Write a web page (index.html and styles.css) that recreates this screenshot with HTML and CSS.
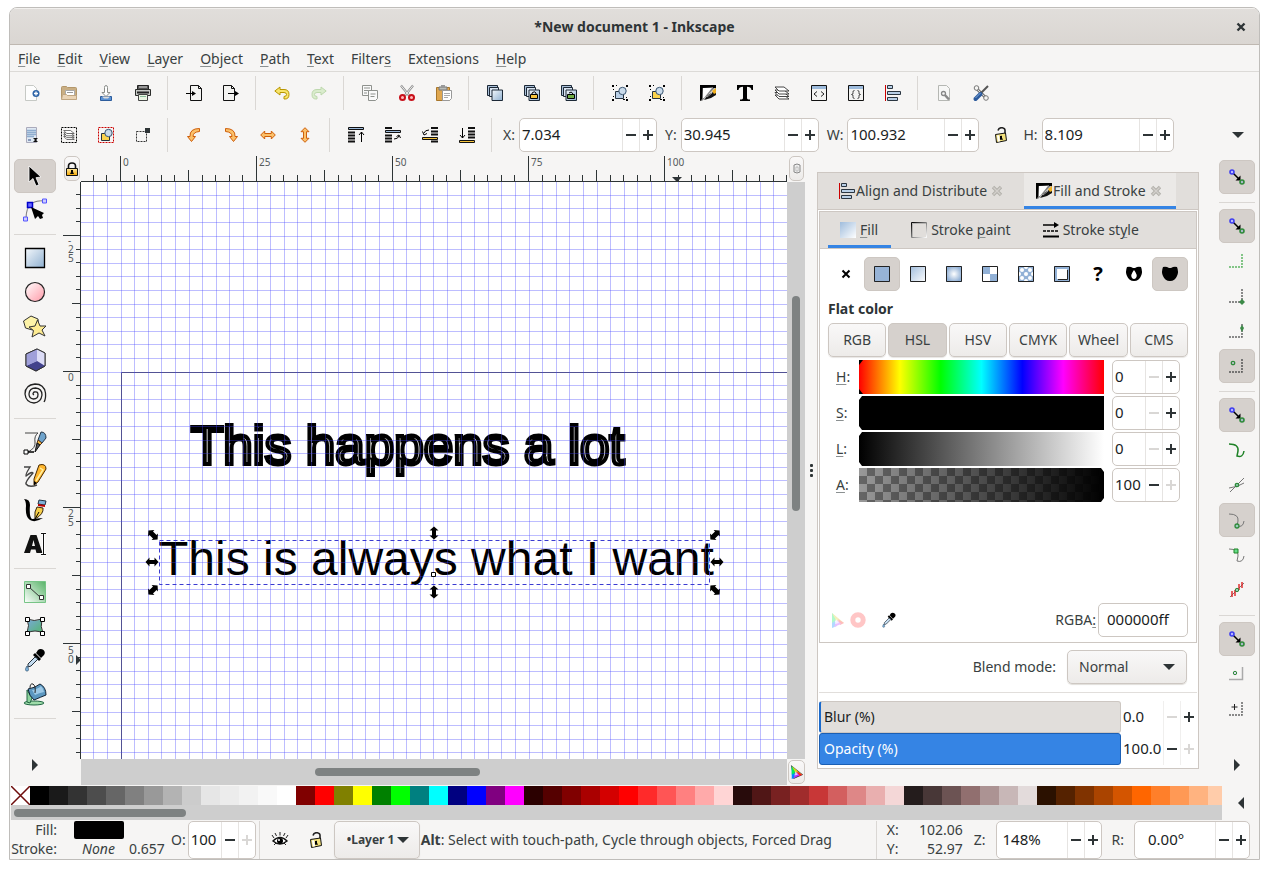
FILE: index.html
```html
<!DOCTYPE html>
<html lang="en">
<head>
<meta charset="utf-8">
<title>*New document 1 - Inkscape</title>
<link rel="stylesheet" href="styles.css">
</head>
<body>
<svg class="defs" aria-hidden="true">
  <defs>
    <linearGradient id="blue" x1="0" y1="0" x2="1" y2="1"><stop offset="0" stop-color="#f4f8fc"/><stop offset="1" stop-color="#8fb0d0"/></linearGradient>
    <linearGradient id="blueRev" x1="0" y1="0" x2="1" y2="1"><stop offset="0" stop-color="#9fbcdc"/><stop offset="1" stop-color="#fff"/></linearGradient>
    <linearGradient id="pink" x1="0" y1="0" x2="1" y2="1"><stop offset="0" stop-color="#fff"/><stop offset="1" stop-color="#ff9aa8"/></linearGradient>
    <linearGradient id="gold" x1="0" y1="0" x2="0" y2="1"><stop offset="0" stop-color="#fde9a0"/><stop offset="1" stop-color="#f5a700"/></linearGradient>
    <linearGradient id="green" x1="0" y1="1" x2="1" y2="0"><stop offset="0" stop-color="#fff"/><stop offset="1" stop-color="#58b368"/></linearGradient>
    <linearGradient id="teal" x1="0" y1="0" x2="1" y2="1"><stop offset="0" stop-color="#7aa8dc"/><stop offset="1" stop-color="#53b66a"/></linearGradient>
    <linearGradient id="ink" x1="0" y1="0" x2="1" y2="1"><stop offset="0" stop-color="#000"/><stop offset="1" stop-color="#fff"/></linearGradient>
    <radialGradient id="glow"><stop offset="0" stop-color="#fff"/><stop offset="1" stop-color="#92b1d6"/></radialGradient>
    <symbol id="minus" viewBox="0 0 10 10"><path d="M0 4h10v2H0z" fill="currentColor"/></symbol>
    <symbol id="plus" viewBox="0 0 10 10"><path d="M0 4h4V0h2v4h4v2H6v4H4V6H0z" fill="currentColor"/></symbol>
    <symbol id="down" viewBox="0 0 12 6"><path d="M0 0h12L6 6z" fill="#2e3436"/></symbol>
    <symbol id="snap" viewBox="0 0 16 16"><path d="M4 4l6 6" stroke="#000" stroke-width="1.500"/><path d="M11.500 6.500v5h-5z" fill="#000"/><circle cx="3" cy="3" r="2" fill="#b5b5ff" stroke="#3d3df0" stroke-width="1.600"/><circle cx="13" cy="13" r="2" fill="#a8b8c8" stroke="#2f8a3a" stroke-width="1.600"/></symbol>
    <symbol id="align" viewBox="0 0 16 16"><path d="M.5 0v16" stroke="#c00"/><path d="M2.500.5h5v3h-5zM2.500 6.500h13v3h-13zM2.500 12.500h10v3h-10z" fill="#b9cfe6" stroke="#2a3540"/></symbol>
    <symbol id="fillstroke" viewBox="0 0 16 16"><path d="M0 0h16v2L2 16H0z" fill="url(#ink)"/><path d="M0 0h16v3h-3V2L2 3v11l-2 2z"/><path d="M3 3h9L4 13H3z" fill="#fff"/><path d="M16 3v7l-5 3-7 2 4-5 5-3z" fill="#111"/><path d="M12 6l4-3v5l-2 1z" fill="#f0b020"/><path d="M7 12l5-4" stroke="#999"/></symbol>
    <symbol id="unlock" viewBox="0 0 16 16"><path d="M5 3.500C6-.5 12.500 0 12 4v3" fill="none" stroke="#222" stroke-width="1.600"/><path d="M2.500 7.500l10-1.500 1 7.500-10 2z" fill="#f3e17c" stroke="#111"/><path d="M4 8.500l2-.3 1 6-2 .5z" fill="#fff"/><path d="M7 9l2-.3v2l1 2H7z"/></symbol>
    <symbol id="page" viewBox="0 0 16 16"><path d="M2.500.5h8l3 3v12h-11z" fill="#f3f3f1" stroke="#111"/><path d="M10.500.5v3h3" fill="none" stroke="#111"/></symbol>
    <symbol id="objs" viewBox="0 0 16 16"><path d="M3.500 6.500h8v7h-8z" fill="var(--box,#b9cfe6)" stroke="#26323e"/><circle cx="10.500" cy="6" r="3.700" fill="#c9daea" stroke="#3a5570"/></symbol>
    <symbol id="corners" viewBox="0 0 16 16"><path d="M0 0h2v2H0zM14 0h2v2h-2zM0 14h2v2H0zM14 14h2v2h-2zM4 0h1v1H4zM11 14h2v1h-2zM1 4h1v1H1zM1 11h1v1H1zM14 12h1v1h-1z"/></symbol>
    <symbol id="copies" viewBox="0 0 16 16"><path d="M.5.500h10v10H.5z" fill="#a9bfd8" stroke="#1c2836"/><path d="M2.500 2.500h9v9h-9z" fill="#d8e4f2" stroke="#1c2836"/><path d="M5 5h10.500v10.500H5z" fill="url(#blue)" stroke="#1c2836"/></symbol>
    <symbol id="layers" viewBox="0 0 16 16"><g fill="#fff" stroke="#333" stroke-width=".9"><path d="M1 10h9l5 4H5z"/><path d="M1 7.500h9l5 4H5z"/><path d="M1 5h9l5 4H5z"/><path d="M1 2h9l5 4H5z"/></g></symbol>
    <symbol id="dropper" viewBox="0 0 24 24"><path d="M15 2c3-3 9 1 6 5l-3 3-5-5z"/><path d="M12 5l6 6-2 2-6-6z"/><path d="M12 9L5 16v3l3-1 7-7z" fill="#c5dcf0" stroke="#23313d"/><path d="M4 18c2 3 2 5 0 5s-2-2 0-5z" fill="#7fb4de" stroke="#31506b" stroke-width=".7"/></symbol>
    <symbol id="square" viewBox="0 0 16 16"><path d="M.5.500h15v15H.5z" fill="none" stroke="#222"/></symbol>
    <symbol id="gamut" viewBox="0 0 16 16"><path d="M2 1l5 13-5 2z" fill="#08f"/><path d="M2 1l6 6-6 4z" fill="#0e5"/><path d="M2 1l12 10-6 1z" fill="#dc2"/><path d="M8 7l6 4-4 2z" fill="#f22"/><path d="M7 8l4 4-7 3z" fill="#b3f"/><path d="M6 7l3 4-4 1z" fill="#fff" opacity=".7"/></symbol>
    <symbol id="arrow2" viewBox="-8 -8 16 16"><path d="M-6.500 0l4-4.500v2.500h5v-2.500l4 4.500-4 4.500V2h-5v2.500z"/></symbol>
    <symbol id="arrow3" viewBox="-8 -8 16 16"><path d="M-6.500 0l4-4.500v2h5v-2l4 4.500-4 4.500v-2h-5v2z"/></symbol>
    <symbol id="xmark" viewBox="0 0 12 12"><path d="M2 2l8 8M10 2L2 10" stroke="#b3b0ab" stroke-width="3.400"/><path d="M2.500 2.500l7 7M9.500 2.500l-7 7" stroke="#d3d0cc" stroke-width="1.400"/></symbol>
  </defs>
</svg>

<div class="window">
  <header class="titlebar">
    <h1>*New document 1 - Inkscape</h1>
    <button class="close" aria-label="Close"><svg width="10" height="10" viewBox="0 0 10 10"><path d="M1.500 1.500l7 7M8.500 1.500l-7 7" stroke="#2e3436" stroke-width="2.400"/></svg></button>
  </header>

  <nav class="menubar">
    <a href="#file"><u>F</u>ile</a><a href="#edit"><u>E</u>dit</a><a href="#view"><u>V</u>iew</a><a href="#layer"><u>L</u>ayer</a><a href="#object"><u>O</u>bject</a><a href="#path"><u>P</u>ath</a><a href="#text"><u>T</u>ext</a><a href="#filters">Filter<u>s</u></a><a href="#extensions">Exte<u>n</u>sions</a><a href="#help"><u>H</u>elp</a>
  </nav>

  <div class="bar">
    <button aria-label="New"><svg class="i" viewBox="0 0 16 16"><path d="M1.500.5h8l3 3v12h-11z" fill="#fdfdfd" stroke="#c6c9c5"/><circle cx="12" cy="8.500" r="3.500" fill="#2f65a8"/><path d="M12 6.500v4M10 8.500h4" stroke="#fff" stroke-width="1.300"/></svg></button>
    <button aria-label="Open"><svg class="i" viewBox="0 0 16 16"><path d="M.5 2.500q0-1 1-1h4l1 1h8q1 0 1 1V14H.5z" fill="#c9ae83" stroke="#b3976b"/><path d="M4.500 5.500h9v5h-9z" fill="#fff" stroke="#aaa"/><path d="M6 7.500h6" stroke="#999"/><path d="M.5 14.500l1-5h4l1 1h9v4z" fill="#ead4b6" stroke="#c0a682"/></svg></button>
    <button aria-label="Save"><svg class="i" viewBox="0 0 16 16"><path d="M2.500 11.500h11v4h-11z" fill="#5b92d4" stroke="#2d5c9c"/><path d="M4 11.500h8l-2 2H6z" fill="#dcdcdc"/><path d="M8 .5q1.500 0 1.500 2v5h2.500l-4 4-4-4h2.500v-5q0-2 1.500-2z" fill="#fff" stroke="#8a8d89"/></svg></button>
    <button aria-label="Print"><svg class="i" viewBox="0 0 16 16"><path d="M2.500.5h11v4h-11z" fill="#555" stroke="#222"/><path d="M4 2h8" stroke="#ddd"/><path d="M.5 4.500h15v6H.5z" fill="#c7c9c5" stroke="#2b2d2b"/><path d="M2 7.500h12" stroke="#222" stroke-width="2"/><path d="M3.500 9.500h9v6h-9z" fill="#eaf5e2" stroke="#444"/><path d="M5 11.500h6" stroke="#8b9" /></svg></button>
    <hr>
    <button aria-label="Import"><svg class="i" viewBox="0 0 16 16"><use href="#page" x="2"/><path d="M0 8.500h9" stroke="#000"/><path d="M6 6l4 2.500L6 11z"/></svg></button>
    <button aria-label="Export"><svg class="i" viewBox="0 0 16 16"><use href="#page" x="-2"/><path d="M5 8.500h9" stroke="#000"/><path d="M12 6l4 2.500-4 2.500z"/></svg></button>
    <hr>
    <button aria-label="Undo"><svg class="i" viewBox="0 0 16 16"><path d="M.8 6L6 2v2.500h4q5 0 5 5T10 14v-2.500q2.500 0 2.500-2t-2.500-2H6V10z" fill="#f8e56b" stroke="#b99600"/></svg></button>
    <button aria-label="Redo" disabled><svg class="i faded" viewBox="0 0 16 16"><path d="M15.200 6L10 2v2.500H6q-5 0-5 5T6 14v-2.500q-2.500 0-2.500-2t2.500-2h4V10z" fill="#cfe9bd" stroke="#a6cc90"/></svg></button>
    <hr>
    <button aria-label="Copy"><svg class="i" viewBox="0 0 16 16"><g fill="#fafafa" stroke="#8f928e"><path d="M.5.500h9v10h-9z"/><path d="M2 3h6M2 5.500h6M2 8h3"/><path d="M6.500 5.500h9v8l-2 2h-7z"/><path d="M8.500 9h5M8.500 11.500h4"/></g></svg></button>
    <button aria-label="Cut"><svg class="i" viewBox="0 0 16 16"><path d="M2 .5l8 10M14 .5l-8 10" stroke="#888" stroke-width="2.200"/><path d="M2 .5l8 10M14 .5l-8 10" stroke="#eee"/><circle cx="3.500" cy="12.500" r="2.500" fill="#fbb" stroke="#c8101a" stroke-width="2"/><circle cx="12.500" cy="12.500" r="2.500" fill="#fbb" stroke="#c8101a" stroke-width="2"/></svg></button>
    <button aria-label="Paste"><svg class="i" viewBox="0 0 16 16"><path d="M.5 2.500h13v13H.5z" fill="#e0a74f" stroke="#a8762b"/><path d="M3 2h8v3H3z" fill="#b9bbb7" stroke="#777"/><path d="M5 0h4v2H5z" fill="#999"/><path d="M6.500 5.500h9v8l-2 2h-7z" fill="#fff" stroke="#999"/><path d="M8 8.500h6M8 10.500h6M8 12.500h4" stroke="#aaa"/></svg></button>
    <hr>
    <button aria-label="Duplicate"><svg class="i" viewBox="0 0 16 16"><use href="#copies"/></svg></button>
    <button aria-label="Clone"><svg class="i" viewBox="0 0 16 16"><use href="#copies"/><path d="M8 10V8q2.500-2.500 4 0v2" fill="none" stroke="#000"/><path d="M6.500 9.500h7v4h-7z" fill="#f6c33c" stroke="#000"/></svg></button>
    <button aria-label="Unlink clone"><svg class="i" viewBox="0 0 16 16"><use href="#copies"/><path d="M8 8q2.500-2.500 4 1v1" fill="none" stroke="#000"/><path d="M6.500 9.500h7v4h-7z" fill="#6fae45" stroke="#000"/></svg></button>
    <hr>
    <button aria-label="Group"><svg class="i" viewBox="0 0 16 16"><use href="#objs"/><use href="#corners"/></svg></button>
    <button aria-label="Ungroup"><svg class="i yellow" viewBox="0 0 16 16"><use href="#objs"/><use href="#corners"/></svg></button>
    <hr>
    <button aria-label="Fill and Stroke"><svg class="i" viewBox="0 0 16 16"><use href="#fillstroke"/></svg></button>
    <button aria-label="Text and Font"><svg class="i" viewBox="0 0 16 16"><path d="M0 0h16v5h-1.500Q14 1.800 10 1.800V13q0 1.500 3 1.500V16H3v-1.500q3 0 3-1.500V1.800Q2 1.800 1.500 5H0z"/></svg></button>
    <button aria-label="Layers"><svg class="i" viewBox="0 0 16 16"><use href="#layers"/></svg></button>
    <button aria-label="XML editor"><svg class="i" viewBox="0 0 16 16"><path d="M.5.500h15v15H.5z" fill="#f4f4f2" stroke="#111"/><path d="M1 1h14v3H1z" fill="#9dbbdc"/><path d="M6 6.500L3 9l3 2.500M10 6.500L13 9l-3 2.500" fill="none" stroke="#222"/></svg></button>
    <button aria-label="Selectors"><svg class="i" viewBox="0 0 16 16"><path d="M.5.500h15v15H.5z" fill="#f4f4f2" stroke="#111"/><path d="M1 1h14v3H1z" fill="#9dbbdc"/><path d="M6.500 5.500q-2 0-1.500 2T3.500 9.500q2 0 1.500 2t1.500 2M9.500 5.500q2 0 1.500 2t1.500 2q-2 0-1.500 2t-1.500 2" fill="none" stroke="#444"/></svg></button>
    <button aria-label="Align"><svg class="i" viewBox="0 0 16 16"><use href="#align"/></svg></button>
    <hr>
    <button aria-label="Document properties"><svg class="i" viewBox="0 0 16 16"><path d="M2.500.5h8l3 3v12h-11z" fill="#f7f7f6" stroke="#b5b7b3"/><path d="M8 9l5 5.500" stroke="#888" stroke-width="2.500"/><circle cx="7.500" cy="8.500" r="2" fill="#f5f5f5" stroke="#888" stroke-width="1.300"/></svg></button>
    <button aria-label="Preferences"><svg class="i" viewBox="0 0 16 16"><path d="M3 3l10 10" stroke="#777" stroke-width="3"/><path d="M3 3l10 10" stroke="#ddd"/><circle cx="3.500" cy="3" r="2.300" fill="#f5f5f3" stroke="#777"/><circle cx="13" cy="13" r="2.300" fill="#f5f5f3" stroke="#777"/><path d="M15 1L8 8" stroke="#555" stroke-width="2"/><path d="M7.500 9L2.500 14" stroke="#2c5a9c" stroke-width="4" stroke-linecap="round"/><path d="M7.500 8l-5 5" stroke="#7fa9dc"/></svg></button>
  </div>

  <div class="bar">
    <button aria-label="Select all"><svg class="i" viewBox="0 0 16 16"><path d="M2.500.5h10v15h-10z" fill="#dfe9f3" stroke="#aab"/><path d="M3 3.500h9M3 5.500h9M3 7.500h9M3 9.500h7" stroke="#8fadcf" stroke-width="1.400"/><path d="M4 12h3v2H4z" fill="#89b"/><path d="M9 11h5l-2 2 2 2H9l2-2z" fill="#111"/></svg></button>
    <button aria-label="Select all in layers"><svg class="i" viewBox="0 0 16 16"><path d="M.5.500h15v15H.5z" fill="none" stroke="#000" stroke-dasharray="2 1"/><svg x="2" y="2" width="12" height="12"><use href="#layers"/></svg></svg></button>
    <button aria-label="Deselect"><svg class="i yellow" viewBox="0 0 16 16"><path d="M.5.500h15v15H.5z" fill="none" stroke="#c00" stroke-dasharray="2 1"/><use href="#objs"/></svg></button>
    <button aria-label="Touch selection"><svg class="i" viewBox="0 0 16 16"><path d="M1.500 4.500h10v10h-10z" fill="none" stroke="#333" stroke-dasharray="2 1"/><path d="M10 1h5v5h-5z" fill="#2e3436"/></svg></button>
    <hr>
    <button aria-label="Rotate left"><svg class="i" viewBox="0 0 16 16"><path d="M13.500 1.500q-10 0-9.500 8H1.500l4 5 4-5H7q0-4.500 6.500-5z" fill="#fbc16a" stroke="#cf5f0a"/></svg></button>
    <button aria-label="Rotate right"><svg class="i" viewBox="0 0 16 16"><path d="M2.500 1.500q10 0 9.500 8h2.500l-4 5-4-5H9q0-4.500-6.500-5z" fill="#fbc16a" stroke="#cf5f0a"/></svg></button>
    <button aria-label="Flip horizontal"><svg class="i" viewBox="0 0 16 16"><path d="M.7 8l4-4v2.500h6.600V4l4 4-4 4V9.500H4.700V12z" fill="#fbc16a" stroke="#cf5f0a"/></svg></button>
    <button aria-label="Flip vertical"><svg class="i" viewBox="0 0 16 16"><path d="M8 .7l4 4H9.500v6.600H12l-4 4-4-4h2.500V4.700H4z" fill="#fbc16a" stroke="#cf5f0a"/></svg></button>
    <hr>
    <button aria-label="Raise to top"><svg class="i" viewBox="0 0 16 16"><path d="M.5.500h15v2H.5z" fill="#9dbbdc" stroke="#111"/><path d="M0 5.500h7M0 8.500h7M0 11.500h7M0 14.500h7" stroke="#111" stroke-width="2"/><path d="M13.500 5v10M11 8l2.500-3L16 8" stroke="#000" fill="none"/></svg></button>
    <button aria-label="Raise"><svg class="i" viewBox="0 0 16 16"><path d="M0 1h7M0 8.500h7M0 11.500h7M0 14.500h7" stroke="#111" stroke-width="2"/><path d="M.5 3.500h15v2H.5z" fill="#9dbbdc" stroke="#111"/><path d="M9 12q4 0 5-3M11.500 9.500L14 8l1.500 3" stroke="#000" fill="none"/></svg></button>
    <button aria-label="Lower"><svg class="i" viewBox="0 0 16 16"><path d="M9 1h7M9 4.500h7M9 7.500h7M9 14.500h7" stroke="#111" stroke-width="2"/><path d="M.5 10.500h15v2H.5z" fill="#f6c33c" stroke="#111"/><path d="M7 3Q3 3 2 6M.5 4.500L2 8l3-1.500" stroke="#000" fill="none"/></svg></button>
    <button aria-label="Lower to bottom"><svg class="i" viewBox="0 0 16 16"><path d="M9 1h7M9 4.500h7M9 7.500h7M9 10.500h7" stroke="#111" stroke-width="2"/><path d="M.5 13.500h15v2H.5z" fill="#f6c33c" stroke="#111"/><path d="M3.500 1v10M1 8l2.500 3L6 8" stroke="#000" fill="none"/></svg></button>
    <hr>
    <span class="field"><label for="px">X:</label><span class="spin wide"><input id="px" value="7.034"><button aria-label="Decrease X"><svg><use href="#minus"/></svg></button><button aria-label="Increase X"><svg><use href="#plus"/></svg></button></span></span>
    <span class="field"><label for="py">Y:</label><span class="spin wide"><input id="py" value="30.945"><button aria-label="Decrease Y"><svg><use href="#minus"/></svg></button><button aria-label="Increase Y"><svg><use href="#plus"/></svg></button></span></span>
    <span class="field"><label for="pw">W:</label><span class="spin mid"><input id="pw" value="100.932"><button aria-label="Decrease W"><svg><use href="#minus"/></svg></button><button aria-label="Increase W"><svg><use href="#plus"/></svg></button></span></span>
    <button class="ratio" aria-label="Lock ratio"><svg class="i" viewBox="0 0 16 16"><use href="#unlock"/></svg></button>
    <span class="field"><label for="ph">H:</label><span class="spin mid"><input id="ph" value="8.109"><button aria-label="Decrease H"><svg><use href="#minus"/></svg></button><button aria-label="Increase H"><svg><use href="#plus"/></svg></button></span></span>
    <button class="more" aria-label="More"><svg width="12" height="6"><use href="#down"/></svg></button>
  </div>

  <main class="body">
    <div class="toolbox">
      <button class="on" aria-label="Selector"><svg class="t" viewBox="0 0 24 24"><path d="M6 2v16l4-3.500 3 7.500 3-1.300-3-7 5-.7z" stroke="#fff" stroke-width=".8"/></svg></button>
      <button aria-label="Node"><svg class="t" viewBox="0 0 24 24"><path d="M3 21Q3 10 8 6T22 3" fill="none" stroke="#777"/><path d="M4.500 4.500h5v5h-5z" fill="#6a6aff" stroke="#00c" stroke-width="1.500"/><path d="M19.500 1h4v4h-4zM.5 19h4v4h-4z" fill="#ccf" stroke="#55f"/><path d="M8 9l13 6-2 2 1 3-3 1-2-3-3 3z"/></svg></button>
      <hr>
      <button aria-label="Rectangle"><svg class="t" viewBox="0 0 24 24"><path d="M2.500 2.500h19v19h-19z" fill="url(#blue)" stroke="#000" stroke-width="1.300"/></svg></button>
      <button aria-label="Ellipse"><svg class="t" viewBox="0 0 24 24"><circle cx="12" cy="12" r="9.500" fill="url(#pink)" stroke="#222" stroke-width="1.200"/></svg></button>
      <button aria-label="Star"><svg class="t" viewBox="0 0 24 24"><path d="M8 2l7 3 .5 7-6 4-7-2-2-7z" fill="#fdf3a8" stroke="#333"/><path d="M14.500 6l2.500 6h6l-4 4 3 6-6-3-7 4 1.500-6.500L6 13l6-1z" fill="#fdeb92" stroke="#333"/></svg></button>
      <button aria-label="3D box"><svg class="t" viewBox="0 0 24 24"><path d="M3 6l11-5 8 4v13l-9 5-10-5z" fill="#b9b9e6" stroke="#333"/><path d="M14 1v12l8 5V5z" fill="#dcdcf6"/><path d="M3 18l11-5 8 5-9 5z" fill="#42428c"/><path d="M3 6l11-5v12L3 18z" fill="#a0a0da"/><path d="M3 6l11-5 8 4v13l-9 5-10-5z" fill="none" stroke="#333"/></svg></button>
      <button aria-label="Spiral"><svg class="t" viewBox="0 0 24 24"><path d="M11 13q-2-1 0-3 4-1 4 2.500 0 4.500-4.500 4.500Q6 16.500 6 12q.5-6 6.500-6 6.500.5 6.500 7-1 7.500-8 8-8-.5-9-9Q2 3 12 2q9 0 10.500 9 .5 6-1.500 9" fill="none" stroke="#222" stroke-width="1.300"/></svg></button>
      <hr>
      <button aria-label="Pen"><svg class="t" viewBox="0 0 24 24"><path d="M2 3h13q-4 3-3 9t-7 10" fill="none" stroke="#444"/><path d="M1 20h4v4H1z" fill="#fff" stroke="#000"/><path d="M5 22h6" stroke="#000" stroke-width="1.500"/><path d="M18 2q5 0 5 6l-4 5-4-3z" fill="#6ea3cc" stroke="#234"/><path d="M15 10l4 3-2 2-3-2z" fill="#f4b93a" stroke="#532"/><path d="M14 13l3 2-5 7z" fill="#555" stroke="#111"/></svg></button>
      <button aria-label="Pencil"><svg class="t" viewBox="0 0 24 24"><path d="M1 3h6q-5 8-4 9 6-5 7-3-8 9-7 11 3 4 11 1" fill="none" stroke="#444" stroke-width="1.400"/><path d="M16 1q7-2 7 4L15 18l-4 3 0-6z" fill="#ffb62e" stroke="#4a2a00"/><path d="M17 4l3 2-7 11" fill="none" stroke="#fff0a0" stroke-width="1.500"/><path d="M11 17v4l3-2z"/></svg></button>
      <button aria-label="Calligraphy"><svg class="t" viewBox="0 0 24 24"><path d="M1 1q6 0 6 6-1 12 2 14l11-1q-8 5-13 2Q2 19 3 8q0-5-2-7z"/><path d="M16 2l7 1-1 4-7-1z" fill="#7fb2d8" stroke="#234"/><path d="M15 6l7 1v2l-7-1z" fill="#b00"/><path d="M14 9l6 1q1 6-8 11-1-8 2-12z" fill="#f7cf4a" stroke="#321"/><path d="M12 21l4-7" stroke="#000"/></svg></button>
      <button aria-label="Text"><svg class="t" viewBox="0 0 24 24"><path d="M7.500 3h6l6 18h-6l-1-3.500H8L7 21H1zM10.500 8L9 14h3z" fill="#111"/><path d="M18 1.500h5M20.500 1.500v21M18 22.500h5" stroke="#fff" stroke-width="2.500"/><path d="M18 1.500h5M20.500 1.500v21M18 22.500h5" stroke="#111"/></svg></button>
      <hr>
      <button aria-label="Gradient"><svg class="t" viewBox="0 0 24 24"><path d="M1.500 1.500h21v21h-21z" fill="url(#green)" stroke="#77c486"/><path d="M6 7l11 10" stroke="#333"/><path d="M3.500 4.500h4v4h-4zM16.500 15.500h4v4h-4z" fill="#fff" stroke="#333"/></svg></button>
      <button aria-label="Mesh"><svg class="t" viewBox="0 0 24 24"><path d="M4 5q7 3 15 0-2 8 1 14-8-4-16 0 3-8 0-14z" fill="url(#teal)" stroke="#333"/><path d="M2.500 3.500h4v4h-4zM17.500 3.500h4v4h-4zM2.500 17.500h4v4h-4zM17.500 17.500h4v4h-4z" fill="#fff" stroke="#000"/></svg></button>
      <button aria-label="Dropper"><svg class="t" viewBox="0 0 24 24"><use href="#dropper"/></svg></button>
      <button aria-label="Paint bucket"><svg class="t" viewBox="0 0 24 24"><ellipse cx="11" cy="21" rx="10" ry="2" fill="#9fdcaa" stroke="#264"/><path d="M4 8l5 8-2 5-3-1z" fill="#8ed49c" stroke="#264"/><path d="M5 7q7-1 12-5 6 3 6 11-5 2-12 5Q6 14 5 7z" fill="#5b97c0" stroke="#123"/><path d="M9 8q6-1 9-4 2 2 3 6-5 1-9 3z" fill="#9cc8e6"/><path d="M7 6q0-5 3-4 3 2 2 9" fill="none" stroke="#222"/></svg></button>
      <hr>
      <button class="expand" aria-label="More tools"><svg width="6" height="12" viewBox="0 0 6 12"><path d="M0 0l6 6-6 6z" fill="#2e3436"/></svg></button>
    </div>

    <div class="desk">
      <button class="corner" aria-label="Lock guides"><svg width="14" height="14" viewBox="0 0 14 14"><path d="M3.500 6V4q0-3 3.500-3t3.500 3v2" fill="none" stroke="#111" stroke-width="1.600"/><path d="M1.500 6.500h11v7h-11z" fill="url(#gold)" stroke="#111"/><path d="M6 8h2v2l1 2H5l1-2z"/></svg></button>
      <svg class="ruler-h" aria-hidden="true">
        <defs><pattern id="tickh" width="136" height="26" patternUnits="userSpaceOnUse" patternTransform="translate(39 0)"><path d="M.5 0v26M14.500 19v7M27.500 19v7M41.500 19v7M54.500 19v7M68.500 14v12M82.500 19v7M95.500 19v7M109.500 19v7M122.500 19v7" stroke="#2e3436"/></pattern></defs>
        <rect width="100%" height="26" fill="url(#tickh)"/><path d="M0 25.500h3000" stroke="#2e3436"/>
        <g class="rt"><text x="42" y="10">0</text><text x="178" y="10">25</text><text x="314" y="10">50</text><text x="450" y="10">75</text><text x="586" y="10">100</text></g>
        <path d="M591 21h10l-5 5z" fill="#2e3436"/>
      </svg>
      <button class="corner" aria-label="Toggle display"><svg width="8" height="12" viewBox="0 0 8 12"><path d="M1 2q3-2 6 0v7q-3 2-6 0z" fill="#eee" stroke="#888"/><path d="M3 4h2v4H3z" fill="#fff" stroke="#999" stroke-width=".6"/></svg></button>
      <svg class="ruler-v" aria-hidden="true">
        <defs><pattern id="tickv" width="19" height="136" patternUnits="userSpaceOnUse" patternTransform="translate(0 189)"><path d="M1 .5h18M14 14.500h5M14 27.500h5M14 41.500h5M14 54.500h5M10 68.500h9M14 82.500h5M14 95.500h5M14 109.500h5M14 122.500h5" stroke="#2e3436"/></pattern></defs>
        <rect width="19" height="100%" fill="url(#tickv)"/><path d="M18.500 0v3000" stroke="#2e3436"/>
        <g class="rt"><text y="62"><tspan x="6">-</tspan><tspan x="6" dy="9">2</tspan><tspan x="6" dy="9">5</tspan></text><text x="6" y="199">0</text><text y="335"><tspan x="6">2</tspan><tspan x="6" dy="9">5</tspan></text><text y="472"><tspan x="6">5</tspan><tspan x="6" dy="9">0</tspan></text></g>
        <path d="M14 473v10l5-5z" fill="#2e3436"/>
      </svg>
      <svg class="canvas" role="img" aria-label="Drawing">
        <defs><pattern id="grid" width="136" height="136" patternUnits="userSpaceOnUse" patternTransform="translate(40 190)"><path d="M.5 0v136M13.500 0v136M27.500 0v136M40.500 0v136M54.500 0v136M68.500 0v136M81.500 0v136M95.500 0v136M108.500 0v136M122.500 0v136M0 .5h136M0 13.500h136M0 27.500h136M0 40.500h136M0 54.500h136M0 68.500h136M0 81.500h136M0 95.500h136M0 108.500h136M0 122.500h136" stroke="#3f3fff" stroke-opacity=".34"/></pattern></defs>
        <path d="M40.500 3000V190.500H3000" fill="none" stroke="#333" stroke-opacity=".8"/>
        <text class="outlined" x="110" y="282">This happens a lot</text>
        <text class="solid" x="78" y="393">This is always what I want</text>
        <rect width="100%" height="100%" fill="url(#grid)"/>
        <rect x="78" y="358" width="550" height="44" transform="translate(.5 .5)" fill="none" stroke="#3a3ad0" stroke-dasharray="4 3"/>
        <path d="M350.500 390.500h4v4h-4z" fill="#fff" stroke="#000"/>
        <g transform="translate(72 353) rotate(45)"><use href="#arrow3" x="-8" y="-8" width="16" height="16"/></g>
        <g transform="translate(634 353) rotate(-45)"><use href="#arrow3" x="-8" y="-8" width="16" height="16"/></g>
        <g transform="translate(72 408) rotate(-45)"><use href="#arrow3" x="-8" y="-8" width="16" height="16"/></g>
        <g transform="translate(634 408) rotate(45)"><use href="#arrow3" x="-8" y="-8" width="16" height="16"/></g>
        <g transform="translate(353 351) rotate(90)"><use href="#arrow2" x="-8" y="-8" width="16" height="16"/></g>
        <g transform="translate(353 410) rotate(90)"><use href="#arrow2" x="-8" y="-8" width="16" height="16"/></g>
        <g transform="translate(71 380)"><use href="#arrow2" x="-8" y="-8" width="16" height="16"/></g>
        <g transform="translate(636 380)"><use href="#arrow2" x="-8" y="-8" width="16" height="16"/></g>
      </svg>
      <div class="vscroll"><i></i></div>
      <div class="hscroll"><i></i></div>
      <button class="corner cms" aria-label="Color management"><svg width="14" height="16" viewBox="0 0 16 16"><path d="M1 0l14 11L4 16z" fill="#333"/><use href="#gamut"/></svg></button>
    </div>

    <div class="grip"><i></i><i></i><i></i></div>

    <section class="dock">
      <div class="tabs">
        <button class="tab"><svg class="i" viewBox="0 0 16 16"><use href="#align"/></svg><span>Align and Distribute</span><svg class="x"><use href="#xmark"/></svg></button>
        <button class="tab on"><svg class="i" viewBox="0 0 16 16"><use href="#fillstroke"/></svg><span>Fill and Stroke</span><svg class="x"><use href="#xmark"/></svg></button>
      </div>
      <div class="notebook">
        <div class="subtabs">
          <button class="on"><svg class="i" viewBox="0 0 16 16"><path d="M0 0h16v16H0z" fill="url(#blueRev)"/></svg><span><u>F</u>ill</span></button>
          <button><svg class="i" viewBox="0 0 16 16"><path d="M.5.500h15v15H.5z" fill="none" stroke="url(#ink)"/><path d="M1.500 15V1.500H15" fill="none" stroke="#999" stroke-width=".6"/></svg><span>Stroke <u>p</u>aint</span></button>
          <button><svg class="i" viewBox="0 0 16 16"><path d="M0 3h13" stroke="#000" stroke-width="1.500"/><path d="M11 0l5 3-5 3z"/><path d="M0 9h16" stroke="#000" stroke-width="1.500" stroke-dasharray="3 1"/><path d="M0 14.500h16" stroke="#000" stroke-width="2"/></svg><span>Stroke st<u>y</u>le</span></button>
        </div>
        <div class="paints">
          <button aria-label="No paint"><svg class="i" viewBox="0 0 16 16"><path d="M4.500 4.500l7 7M11.500 4.500l-7 7" stroke="#000" stroke-width="2"/></svg></button>
          <button class="on" aria-label="Flat color"><svg class="i" viewBox="0 0 16 16"><path d="M0 0h16v16H0z" fill="#97b3d6"/><use href="#square"/></svg></button>
          <button aria-label="Linear gradient"><svg class="i" viewBox="0 0 16 16"><path d="M0 0h16v16H0z" fill="url(#blueRev)"/><use href="#square"/></svg></button>
          <button aria-label="Radial gradient"><svg class="i" viewBox="0 0 16 16"><path d="M0 0h16v16H0z" fill="url(#glow)"/><use href="#square"/></svg></button>
          <button aria-label="Mesh gradient"><svg class="i" viewBox="0 0 16 16"><path d="M0 0h16v16H0z" fill="#fff"/><path d="M0 0h8v16h8V8H0z" fill="#92b1d6"/><path d="M0 8h8v8H0z" fill="#fff"/><use href="#square"/></svg></button>
          <button aria-label="Pattern"><svg class="i" viewBox="0 0 16 16"><path d="M0 0h16v16H0z" fill="#92b1d6"/><g fill="#fff"><circle cx="4" cy="4" r="2"/><circle cx="8" cy="8" r="2"/><circle cx="12" cy="4" r="2"/><circle cx="4" cy="12" r="2"/><circle cx="12" cy="12" r="2"/><circle cx="8" cy="1" r="2"/><circle cx="8" cy="15" r="2"/><circle cx="1" cy="8" r="2"/><circle cx="15" cy="8" r="2"/></g><use href="#square"/></svg></button>
          <button aria-label="Swatch"><svg class="i" viewBox="0 0 16 16"><path d="M0 0h16v16H0z" fill="#92b1d6"/><path d="M3 3h10v10H3z" fill="#fff"/><path d="M4 13.500h9.500V4" fill="none" stroke="#222"/><use href="#square"/></svg></button>
          <button aria-label="Unset"><b>?</b></button>
          <button aria-label="Even-odd"><svg class="i" viewBox="0 0 16 16"><path fill-rule="evenodd" d="M1 1q3-1 6 1h2q3-2 6-1 2 5 0 9-2 5-7 5t-7-5q-2-4 0-9zM8 4Q4 9 6 12q2 2 4 0 2-3-2-8z"/></svg></button>
          <button class="on" aria-label="Non-zero"><svg class="i" viewBox="0 0 16 16"><path d="M1 1q3-1 6 1h2q3-2 6-1 2 5 0 9-2 5-7 5t-7-5q-2-4 0-9z"/></svg></button>
        </div>
        <h2>Flat color</h2>
        <div class="modes"><button>RGB</button><button class="on">HSL</button><button>HSV</button><button>CMYK</button><button>Wheel</button><button>CMS</button></div>
        <div class="sliders">
          <label for="sh"><u>H</u>:</label><span class="slide"><input type="range" class="hue" value="0" aria-label="Hue"><svg><path d="M0 0h4L0 5z"/></svg><svg class="b"><path d="M0 0h4L0 5z"/></svg></span><span class="spin"><input id="sh" value="0"><button disabled aria-label="Decrease hue"><svg><use href="#minus"/></svg></button><button aria-label="Increase hue"><svg><use href="#plus"/></svg></button></span>
          <label for="ss"><u>S</u>:</label><span class="slide"><input type="range" class="sat" value="0" aria-label="Saturation"><svg class="w"><path d="M0 0h3L0 4z"/></svg><svg class="b w"><path d="M0 0h3L0 4z"/></svg></span><span class="spin"><input id="ss" value="0"><button disabled aria-label="Decrease saturation"><svg><use href="#minus"/></svg></button><button aria-label="Increase saturation"><svg><use href="#plus"/></svg></button></span>
          <label for="sl"><u>L</u>:</label><span class="slide"><input type="range" class="lum" value="0" aria-label="Lightness"><svg class="w"><path d="M0 0h3L0 4z"/></svg><svg class="b w"><path d="M0 0h3L0 4z"/></svg></span><span class="spin"><input id="sl" value="0"><button disabled aria-label="Decrease lightness"><svg><use href="#minus"/></svg></button><button aria-label="Increase lightness"><svg><use href="#plus"/></svg></button></span>
          <label for="sa"><u>A</u>:</label><span class="slide"><input type="range" class="alpha" value="100" aria-label="Alpha"><svg class="w r"><path d="M0 0h3L0 4z"/></svg><svg class="b w r"><path d="M0 0h3L0 4z"/></svg></span><span class="spin"><input id="sa" value="100"><button aria-label="Decrease alpha"><svg><use href="#minus"/></svg></button><button disabled aria-label="Increase alpha"><svg><use href="#plus"/></svg></button></span>
        </div>
        <div class="rgba">
          <button disabled aria-label="Color managed"><svg class="i faded" viewBox="0 0 16 16"><use href="#gamut"/></svg></button>
          <button disabled aria-label="Out of gamut"><svg class="i faded" viewBox="0 0 16 16"><circle cx="8" cy="8" r="5.200" fill="#fff" stroke="#f44" stroke-width="5"/></svg></button>
          <button class="pick" aria-label="Pick color"><svg class="i" viewBox="0 0 24 24"><use href="#dropper"/></svg></button>
          <label for="hex">RGBA<u>:</u></label><input id="hex" value="000000ff">
        </div>
      </div>
      <div class="blend"><label for="blend">Blend mode:</label><span class="combo"><select id="blend"><option>Normal</option></select><svg width="12" height="6"><use href="#down"/></svg></span></div>
      <div class="scales">
        <div class="scale"><span class="fill"><input type="range" value="0" id="blur"><label for="blur">Blur (%)</label></span><input class="num" value="0.0" aria-label="Blur value"><button disabled aria-label="Decrease blur"><svg><use href="#minus"/></svg></button><button aria-label="Increase blur"><svg><use href="#plus"/></svg></button></div>
        <div class="scale full"><span class="fill"><input type="range" value="100" id="opac"><label for="opac">Opacity (%)</label></span><input class="num" value="100.0" aria-label="Opacity value"><button aria-label="Decrease opacity"><svg><use href="#minus"/></svg></button><button disabled aria-label="Increase opacity"><svg><use href="#plus"/></svg></button></div>
      </div>
    </section>

    <div class="snapbar">
      <button class="on" aria-label="Enable snapping"><svg class="i" viewBox="0 0 16 16"><use href="#snap"/></svg></button>
      <hr>
      <button class="on" aria-label="Snap bounding boxes"><svg class="i" viewBox="0 0 16 16"><use href="#snap"/></svg></button>
      <button aria-label="Snap edges"><svg class="i" viewBox="0 0 16 16"><path d="M0 14h13V1" fill="none" stroke="#5db563" stroke-width="1.500" stroke-dasharray="2 1"/></svg></button>
      <button aria-label="Snap corners"><svg class="i" viewBox="0 0 16 16"><path d="M0 14h13V1" fill="none" stroke="#666" stroke-width="1.500" stroke-dasharray="2 1"/><path d="M13 11l3 3-3 3-3-3z" fill="#3c8a48"/></svg></button>
      <button aria-label="Snap edge midpoints"><svg class="i" viewBox="0 0 16 16"><path d="M0 14h13V1" fill="none" stroke="#666" stroke-width="1.500" stroke-dasharray="2 1"/><path d="M13 2l2 3-2 4-2-4z" fill="#3c8a48"/></svg></button>
      <button class="on" aria-label="Snap centers"><svg class="i" viewBox="0 0 16 16"><path d="M0 14h13V1" fill="none" stroke="#555" stroke-width="1.500" stroke-dasharray="2 1"/><circle cx="4" cy="5" r="1.700" fill="#ccd" stroke="#2f8a3a" stroke-width="1.300"/></svg></button>
      <hr>
      <button class="on" aria-label="Snap nodes"><svg class="i" viewBox="0 0 16 16"><use href="#snap"/></svg></button>
      <button aria-label="Snap paths"><svg class="i" viewBox="0 0 16 16"><path d="M0 2q10 0 9 7l-1 5q6 2 7-5" fill="none" stroke="#1f8227" stroke-width="1.500"/></svg></button>
      <button aria-label="Snap intersections"><svg class="i" viewBox="0 0 16 16"><path d="M1 15L15 1M0 11q9-1 15-5" fill="none" stroke="#777"/><circle cx="8" cy="8" r="1.700" fill="#9cb" stroke="#2f8a3a" stroke-width="1.300"/></svg></button>
      <button class="on" aria-label="Snap cusps"><svg class="i" viewBox="0 0 16 16"><path d="M0 2q10 0 9 7l-1 5q6 2 7-5" fill="none" stroke="#777"/><circle cx="8" cy="14" r="2" fill="#9cb" stroke="#2f8a3a" stroke-width="1.300"/></svg></button>
      <button aria-label="Snap smooth nodes"><svg class="i" viewBox="0 0 16 16"><path d="M0 2q10 0 9 7l-1 5q6 2 7-5" fill="none" stroke="#777"/><path d="M5 2h4v4H5z" fill="#6d8" stroke="#1f8227"/></svg></button>
      <button aria-label="Snap midpoints"><svg class="i" viewBox="0 0 16 16"><path d="M1 15L15 1" stroke="#777"/><path d="M3 9v6M6 8v6M10 2v6M13 0v6" stroke="#d22" stroke-width="1.400"/><circle cx="8" cy="8" r="1.700" fill="#9cb" stroke="#2f8a3a"/></svg></button>
      <hr>
      <button class="on" aria-label="Snap others"><svg class="i" viewBox="0 0 16 16"><use href="#snap"/></svg></button>
      <button aria-label="Snap object centers"><svg class="i" viewBox="0 0 16 16"><path d="M0 13.500h13.500V1" fill="none" stroke="#aaa" stroke-width="1.500"/><circle cx="6" cy="7" r="1.700" fill="#dde" stroke="#2f8a3a"/></svg></button>
      <button aria-label="Snap rotation centers"><svg class="i" viewBox="0 0 16 16"><path d="M0 14h13V1" fill="none" stroke="#666" stroke-width="1.500" stroke-dasharray="2 1"/><path d="M5.500 3v6M2.500 6h6" stroke="#222"/></svg></button>
      <button class="expand" aria-label="More snapping"><svg width="6" height="12" viewBox="0 0 6 12"><path d="M0 0l6 6-6 6z" fill="#2e3436"/></svg></button>
    </div>
  </main>

  <div class="palette">
    <div class="strip">
      <div class="swatches" id="swatches"><button class="none" aria-label="None"><svg width="19" height="19" viewBox="0 0 19 19"><path d="M0 0l19 19M19 0L0 19" stroke="#6e0c0c" stroke-width="1.500"/></svg></button></div>
      <div class="pscroll"><i></i></div>
    </div>
    <button class="pmenu" aria-label="Palette menu"><svg width="6" height="12" viewBox="0 0 6 12"><path d="M6 0L0 6l6 6z" fill="#2e3436"/></svg></button>
  </div>

  <footer class="status">
    <div class="style">
      <span class="k">Fill:</span><button class="black" aria-label="Fill color"></button><span></span>
      <span class="k">Stroke:</span><em>None</em><span>0.657</span>
    </div>
    <label for="op">O:</label>
    <span class="spin o"><input id="op" value="100"><button aria-label="Decrease opacity"><svg><use href="#minus"/></svg></button><button disabled aria-label="Increase opacity"><svg><use href="#plus"/></svg></button></span>
    <hr>
    <button class="flat" aria-label="Layer visibility"><svg class="i" viewBox="0 0 16 16"><path d="M1 9q7-7 14 0-7 6-14 0z" fill="#fff" stroke="#111" stroke-width="1.400"/><circle cx="8" cy="9" r="3"/><circle cx="7" cy="8" r="1" fill="#fff"/><path d="M2 6L0 3M4.500 4L3 1M8 3.500V0M11.500 4L13 1M14 6l2-3M2 13l2-2M14 13l-2-2" stroke="#222"/></svg></button>
    <button class="flat" aria-label="Layer lock"><svg class="i" viewBox="0 0 16 16"><use href="#unlock"/></svg></button>
    <span class="combo layer"><select aria-label="Layer"><option>•Layer 1</option></select><svg width="12" height="6"><use href="#down"/></svg></span>
    <p><b>Alt</b>: Select with touch-path, Cycle through objects, Forced Drag</p>
    <hr>
    <div class="coords"><span>X:</span><span>102.06</span><span>Y:</span><span>52.97</span></div>
    <label for="zoom">Z:</label>
    <span class="spin z"><input id="zoom" value="148%"><button aria-label="Zoom out"><svg><use href="#minus"/></svg></button><button aria-label="Zoom in"><svg><use href="#plus"/></svg></button></span>
    <label for="rot">R:</label>
    <span class="spin rot"><input id="rot" value="0.00°"><button aria-label="Rotate less"><svg><use href="#minus"/></svg></button><button aria-label="Rotate more"><svg><use href="#plus"/></svg></button></span>
  </footer>
</div>
<script src="palette.js"></script>
</body>
</html>
```

FILE: palette.js
```js
const colors = (
  "000000 1a1a1a 333333 4d4d4d 666666 808080 999999 b3b3b3 cccccc e6e6e6 ececec f2f2f2 f9f9f9 ffffff " +
  "800000 ff0000 808000 ffff00 008000 00ff00 008080 00ffff 000080 0000ff 800080 ff00ff " +
  "2b0000 550000 800000 aa0000 d40000 ff0000 ff2a2a ff5555 ff8080 ffaaaa ffd5d5 " +
  "280b0b 501616 782121 a02c2c c83737 d35f5f de8787 e9afaf f4d7d7 " +
  "241c1c 483737 6c5353 916f6f ac9393 c8b7b7 e3dbdb " +
  "2b1100 552200 803300 aa4400 d45500 ff6600 ff7f2a ff9955 ffb380 ffccaa"
).split(" ");
const row = document.getElementById("swatches");
for (const c of colors) {
  const b = document.createElement("button");
  b.style.backgroundColor = "#" + c;
  b.setAttribute("aria-label", "#" + c);
  row.append(b);
}
```

FILE: styles.css
```css
* { box-sizing: border-box; }
body { margin: 0; background: #fff; color: #393f41; font: 14px/18px "Noto Sans", sans-serif; }
button, input, select { font: inherit; color: inherit; margin: 0; padding: 0; border: 0; background: none; border-radius: 0; outline: 0; }
button { display: flex; align-items: center; justify-content: center; }
hr { margin: 0; border: 0; background: #dad7d4; flex: none; }
h1, h2, p { margin: 0; font-size: inherit; }
a { color: inherit; text-decoration: none; }
u { text-decoration-thickness: 1px; text-underline-offset: 2px; text-decoration-color: #8b9091; }
svg { display: block; flex: none; overflow: visible; }
.defs { position: absolute; width: 0; height: 0; }
.i { width: 16px; height: 16px; }
.t { width: 24px; height: 24px; }
.faded { opacity: .3; }
.bar .faded { opacity: .7; }
.yellow { --box: #fbd24c; }

.window { display: flex; flex-direction: column; height: calc(100vh - 16px); min-height: 853px; margin: 7px 9px 9px; border: 1px solid #bfbdba; border-radius: 8px 8px 0 0; background: #f6f5f4; overflow: hidden; }
.titlebar { display: flex; align-items: center; height: 37px; padding: 2px 13px 0 23px; background: linear-gradient(#e1dedb, #dad6d2); border-bottom: 1px solid #bfb8b1; box-shadow: inset 0 1px #f2f0ee; }
.titlebar h1 { flex: 1; text-align: center; color: #2e3436; }
.menubar { display: flex; gap: 1px; height: 27px; padding-top: 1px; align-items: center; border-bottom: 1px solid #dcdad7; }
.menubar a { padding: 0 8px; }

.bar { display: flex; align-items: center; height: 42px; padding-left: 3px; }
.bar > button { width: 37px; height: 34px; }
.bar > hr { width: 1px; height: 34px; margin: 0 7px 0 6px; }
.field { display: flex; align-items: center; gap: 4px; margin-left: 4px; }
.field + .field { margin-left: 8px; }
.bar > .ratio { width: 44px; }
.ratio + .field { margin-left: 0; }
.bar > .more { width: 20px; margin: 0 11px 0 auto; }

.spin { display: flex; height: 34px; border: 1px solid #cdc7c2; border-radius: 5px; background: #fff; overflow: hidden; color: #1a1d1e; font-size: 15px; }
.spin input { flex: 1; min-width: 0; width: 0; padding: 0 0 2px 2px; }
.spin button { width: 17px; border-left: 1px solid #e6e4e2; color: #2e3436; }
.spin svg, .scale svg { width: 10px; height: 10px; }
.spin button:disabled, .scale button:disabled { color: #d9d7d5; }
.wide { width: 138px; }
.mid { width: 132px; }

.body { display: flex; flex: 1; min-height: 0; }
.toolbox { display: flex; flex-direction: column; width: 52px; padding: 3px 6px 3px 4px; }
.toolbox button { height: 34px; border: 1px solid transparent; border-radius: 5px; }
.toolbox hr, .snapbar hr { height: 1px; margin: 7px 0 6px; }
button.on { background: #d6d1cd; border-color: #cdc7c2; }
.toolbox .expand, .snapbar .expand { margin-top: auto; }

.desk { flex: 1; min-width: 0; display: grid; grid-template: 26px minmax(0, 1fr) 26px / 19px minmax(0, 1fr) 18px; }
.corner { border: 1px solid #cdc7c2; border-radius: 5px; background: linear-gradient(#f9f8f8, #edebe9); margin: 0 1px 1px 2px; }
.corner.cms { margin: 1px 0 1px 1px; overflow: hidden; }
.ruler-h, .ruler-v, .canvas { width: 100%; height: 100%; overflow: hidden; }
.canvas { background: #fff; }
.rt { font-size: 10px; fill: #555a5c; }
.canvas text { font-family: "Liberation Sans", Arial, sans-serif; }
.outlined { font-size: 53px; fill: #ddd; stroke: #000; stroke-width: 4px; }
.solid { font-size: 48px; fill: #000; }
.vscroll, .hscroll { background: #cecece; }
.vscroll { padding: 114px 5px 0; }
.vscroll i { display: block; height: 215px; border-radius: 4px; background: #7e8282; }
.hscroll { grid-column: 2; padding: 9px 0 0 234px; }
.hscroll i { display: block; width: 165px; height: 8px; border-radius: 4px; background: #7e8282; }
.grip { display: flex; flex-direction: column; justify-content: center; align-items: center; gap: 2px; width: 12px; }
.grip i { width: 3px; height: 3px; border-radius: 1px; background: #2e3436; }

.dock { display: flex; flex-direction: column; width: 382px; margin: 16px 0 16px; border: 1px solid #cdc7c2; background: #fff; }
.tabs { display: flex; height: 37px; background: #e1dedb; border-bottom: 1px solid #cdc7c2; }
.tab { gap: 1px; padding: 0 21px 0 21px; }
.tab .x { width: 12px; height: 12px; margin-left: 3px; }
.tab.on { padding: 0 14px 0 12px; background: #ebe9e7; box-shadow: inset 0 -3px #3584e4; }
.notebook { display: flex; flex-direction: column; flex: 1; margin: 1px 1px 0; border: 1px solid #cdc7c2; }
.subtabs { display: flex; gap: 8px; height: 37px; padding-left: 8px; background: #e1dedb; border-bottom: 1px solid #cdc7c2; }
.subtabs button { gap: 4px; padding: 0 12px; }
.subtabs .on { padding: 0 13px 0 12px; background: none; box-shadow: inset 0 -3px #3584e4; }
.paints { display: grid; grid-template-columns: repeat(10, 1fr); margin: 8px 8px 0; }
.paints button { height: 34px; border: 1px solid transparent; border-radius: 5px; color: #000; }
.paints b { font-size: 20px; }
.paints .on { background: #d6d1cd; border-color: #cdc7c2; }
h2 { margin: 9px 8px 5px; color: #2e3436; }
.modes { display: grid; grid-template-columns: repeat(6, 1fr); gap: 2px; margin: 0 8px; }
.modes button { height: 34px; border: 1px solid #cdc7c2; border-radius: 5px; background: linear-gradient(#f9f8f8, #edebe9); box-shadow: 0 1px 1px #e8e6e4; }
.modes .on { background: #d6d1cd; }
.sliders { display: grid; grid-template-columns: 23px minmax(0, 1fr) 68px; align-items: center; column-gap: 8px; row-gap: 2px; margin: 3px 16px 0; }
.sliders label { width: 23px; }
.slide { position: relative; height: 34px; margin-left: -8px; }
.slide input { display: block; appearance: none; width: 100%; height: 34px; }
input[type=range]::-webkit-slider-thumb { appearance: none; width: 1px; height: 1px; }
.slide svg { position: absolute; left: 0; top: 0; width: 5px; height: 5px; }
.slide svg.w { fill: #fff; }
.slide svg.b { top: auto; bottom: 0; transform: scaleY(-1); }
.slide svg.r { left: auto; right: 0; transform: scaleX(-1); }
.slide svg.b.r { transform: scale(-1); }
.hue { background: linear-gradient(90deg, #f00, #ff0, #0f0, #0ff, #00f, #f0f, #f00); }
.sat { background: #000; }
.lum { background: linear-gradient(90deg, #000, #fff); }
.alpha { background: linear-gradient(90deg, transparent, #000), repeating-conic-gradient(#666 0 25%, #999 0 50%) 0 0 / 16px 16px; }
.rgba { display: flex; align-items: center; margin: auto 8px 5px; }
.rgba button { width: 20px; height: 34px; }
.rgba .pick { margin-left: 11px; }
.rgba label { margin-left: auto; margin-right: 2px; }
#hex { width: 90px; height: 34px; padding: 0 0 2px 8px; border: 1px solid #cdc7c2; border-radius: 5px; font-size: 15px; color: #1a1d1e; }
.blend { display: flex; align-items: center; justify-content: flex-end; gap: 11px; height: 50px; padding: 0 10px 2px 0; border-bottom: 1px solid #e1dedb; margin: 0 1px; }
.combo { position: relative; display: flex; }
.combo select { appearance: none; width: 120px; height: 34px; padding-left: 11px; border: 1px solid #cdc7c2; border-radius: 5px; background: linear-gradient(#f9f8f8, #edebe9); box-shadow: 0 1px 1px #e0deda; }
.combo svg { position: absolute; right: 12px; top: 14px; pointer-events: none; }
.scales { margin: 8px 1px 3px; }
.scale { display: flex; height: 32px; color: #1a1d1e; }
.scale .fill { position: relative; flex: 1; display: flex; }
.scale .fill input { appearance: none; width: 100%; height: 32px; background: #e1dedb; border: 1px solid #cdc7c2; border-left: 2px solid #1b6acb; border-radius: 3px; }
.scale.full .fill input { background: #3584e4; border: 1px solid #1b5fb4; }
.scale label { position: absolute; left: 5px; top: 7px; }
.full label { color: #fff; }
.scale .num { width: 42px; padding: 0 0 2px 2px; font-size: 15px; }
.scale button { width: 17px; border-left: 1px solid #f0efee; color: #2e3436; }

.snapbar { display: flex; flex-direction: column; width: 60px; padding: 4px 4px 3px 20px; }
.snapbar button { height: 34px; margin-bottom: 1px; border: 1px solid transparent; border-radius: 5px; }
.snapbar .on { border-color: #cdc7c2; }
.toolbox button.expand, .snapbar button.expand { height: 34px; margin-bottom: 0; }

.palette { display: flex; height: 35px; padding: 1px 0 0 1px; }
.strip { flex: 1; min-width: 0; }
.swatches { display: flex; height: 19px; overflow: hidden; }
.swatches button { flex: none; width: 19px; height: 19px; }
.swatches .none { background: #fff; }
.pscroll { height: 15px; padding: 4px 3px; background: #cecece; }
.pscroll i { display: block; width: 172px; height: 8px; border-radius: 4px; background: #7e8282; }
.pmenu { width: 37px; }

.status { display: flex; align-items: center; height: 39px; }
.style { display: grid; grid-template: 19px 19px / 47px 67px 46px; align-items: center; white-space: nowrap; }
.style .k { text-align: right; }
.style em { text-align: center; padding-left: 16px; }
.style span:last-child { padding-left: 5px; }
.black { width: 50px; height: 18px; margin-left: 17px; background: #000; border-radius: 2px; }
.status label { margin: 0 2px 0 1px; }
.status .spin { height: 38px; }
.spin.o { width: 68px; }
.status hr { width: 1px; height: 38px; margin: 0 2px 0 3px; }
.flat { width: 36px; height: 34px; }
.status .layer { margin: 0 1px 0 0; }
.layer select { width: 86px; height: 38px; padding-left: 12px; font-size: 12px; font-weight: bold; }
.layer svg { right: 11px; top: 16px; }
.status p { flex: 1; min-width: 0; white-space: nowrap; }
.coords { display: grid; grid-template: 19px 19px / 22px 54px; align-items: center; margin: 0 10px 0 8px; }
.coords span:nth-child(even) { text-align: right; }
.status .spin.z { width: 106px; margin: 0 9px 0 8px; }
.status .spin.rot { width: 116px; margin: 0 9px 0 8px; }
.z input { padding-left: 6px; }
.rot input { padding-left: 13px; }
```
